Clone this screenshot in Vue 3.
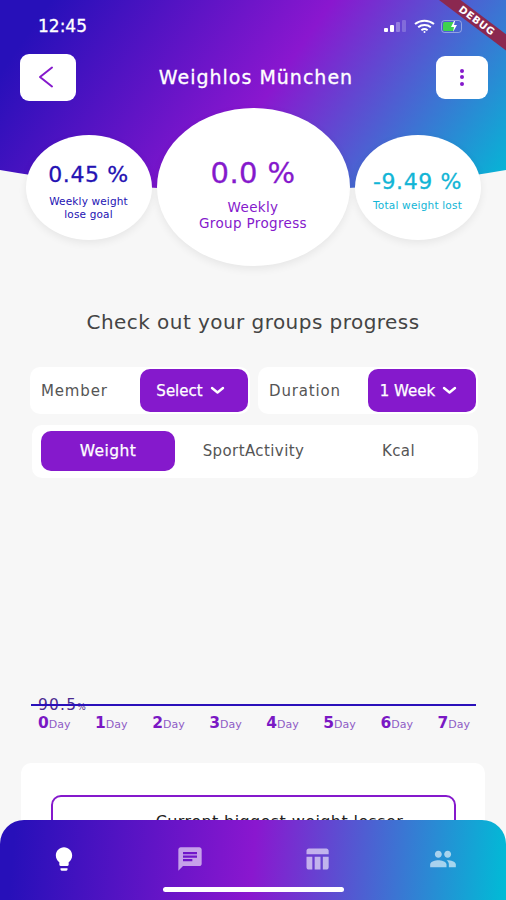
<script setup>
const stats = [
  { value: '0.45 %', label: ['Weekly weight', 'lose goal'], kind: 'goal' },
  { value: '0.0 %', label: ['Weekly', 'Group Progress'], kind: 'group' },
  { value: '-9.49 %', label: ['Total weight lost'], kind: 'total' }
]
const days = [0, 1, 2, 3, 4, 5, 6, 7]
const navIcons = [
  { d: 'M9 21c0 .55.45 1 1 1h4c.55 0 1-.45 1-1v-1H9v1zm3-19C8.14 2 5 5.14 5 9c0 2.38 1.19 4.47 3 5.74V17c0 .55.45 1 1 1h6c.55 0 1-.45 1-1v-2.26c1.81-1.27 3-3.36 3-5.74 0-3.86-3.14-7-7-7z', active: true },
  { d: 'M20 2H4c-1.1 0-1.99.9-1.99 2L2 22l4-4h14c1.1 0 2-.9 2-2V4c0-1.1-.9-2-2-2zM6 9h12v2H6V9zm8 5H6v-2h8v2zm4-6H6V6h12v2z' },
  { d: 'M10 10.02h5V21h-5zM17 21h3c1.1 0 2-.9 2-2v-9h-5v11zm3-18H5c-1.1 0-2 .9-2 2v3h19V5c0-1.1-.9-2-2-2zM3 19c0 1.1.9 2 2 2h3V10H3v9z' },
  { d: 'M16 11c1.66 0 2.99-1.34 2.99-3S17.66 5 16 5c-1.66 0-3 1.34-3 3s1.34 3 3 3zm-8 0c1.66 0 2.99-1.34 2.99-3S9.66 5 8 5C6.34 5 5 6.34 5 8s1.34 3 3 3zm0 2c-2.33 0-7 1.17-7 3.5V19h14v-2.5c0-2.33-4.67-3.5-7-3.5zm8 0c-.29 0-.62.02-.97.05 1.16.84 1.97 1.97 1.97 3.45V19h6v-2.5c0-2.33-4.67-3.5-7-3.5z' }
]
</script>

<template>
  <div class="screen">
    <div class="hero-bg"></div>

    <div class="status">
      <span class="time">12:45</span>
      <div class="status-icons">
        <svg width="24" height="14" viewBox="0 0 24 14">
          <rect x="0" y="9" width="4" height="4" rx="1" fill="#fff" />
          <rect x="6" y="6" width="4" height="7" rx="1" fill="#fff" />
          <rect x="12" y="3" width="4" height="10" rx="1" fill="#fff" opacity=".3" />
          <rect x="18" y="1" width="4" height="12" rx="1" fill="#fff" opacity=".2" />
        </svg>
        <svg width="21" height="15" viewBox="0 0 21 15" fill="none" stroke="#fff" stroke-width="2">
          <path d="M1 5c5.500-4.500 13.500-4.500 19 0" />
          <path d="M4.200 8.200c3.600-3 9-3 12.600 0" />
          <path d="M7.400 11.200c1.800-1.400 4.400-1.400 6.200 0" />
          <circle cx="10.500" cy="13" r="1" fill="#fff" stroke="none" />
        </svg>
        <svg width="23" height="13" viewBox="0 0 23 13">
          <rect x=".5" y=".5" width="20" height="12" rx="3" fill="none" stroke="#fff" stroke-opacity=".4" />
          <rect x="2" y="2" width="11" height="9" rx="1.500" fill="#3fd14e" />
          <path d="M13 1l-3 6h3l-1 5 4-7h-3l1-4z" fill="#fff" />
        </svg>
      </div>
    </div>

    <div class="debug"><span>DEBUG</span></div>

    <header class="topbar">
      <button class="tool back">
        <svg width="16" height="22" viewBox="0 0 16 22" fill="none" stroke="#8519cc" stroke-width="2" stroke-linecap="round" stroke-linejoin="round">
          <path d="M14 1.500L2 11l12 9.500" />
        </svg>
      </button>
      <h1>Weighlos München</h1>
      <button class="tool menu">
        <i></i><i></i><i></i>
      </button>
    </header>

    <section class="stats">
      <div v-for="s in stats" :key="s.kind" class="bubble" :class="s.kind">
        <div class="value">{{ s.value }}</div>
        <div class="label">
          <div v-for="line in s.label" :key="line">{{ line }}</div>
        </div>
      </div>
    </section>

    <h2>Check out your groups progress</h2>

    <section class="filters">
      <div class="filter">
        <span>Member</span>
        <button class="pick">Select
          <svg width="15" height="9" viewBox="0 0 15 9" fill="none" stroke="#fff" stroke-width="2.400" stroke-linecap="round" stroke-linejoin="round"><path d="M2 2l5.500 4.500L13 2" /></svg>
        </button>
      </div>
      <div class="filter">
        <span>Duration</span>
        <button class="pick">1 Week
          <svg width="15" height="9" viewBox="0 0 15 9" fill="none" stroke="#fff" stroke-width="2.400" stroke-linecap="round" stroke-linejoin="round"><path d="M2 2l5.500 4.500L13 2" /></svg>
        </button>
      </div>
    </section>

    <section class="tabs">
      <div class="tab on">Weight</div>
      <div class="tab">SportActivity</div>
      <div class="tab">Kcal</div>
    </section>

    <section class="chart">
      <div class="plot">
        <span class="tick">90.5<small>%</small></span>
        <div class="line"></div>
      </div>
      <div class="axis">
        <span v-for="d in days" :key="d"><b>{{ d }}</b>Day</span>
      </div>
    </section>

    <section class="card">
      <div class="loser">Current biggest weight losser</div>
    </section>

    <nav class="bottom">
      <svg v-for="(n, i) in navIcons" :key="i" class="nav-icon" :class="{ active: n.active }" width="28" height="28" viewBox="0 0 24 24">
        <path :d="n.d" />
      </svg>
      <div class="home"></div>
    </nav>
  </div>
</template>

<style scoped>
.screen {
  position: relative;
  width: 506px;
  height: 900px;
  overflow: hidden;
  background: #f7f7f7;
  font-family: "DejaVu Sans", "Noto Sans", sans-serif;
}
.hero-bg {
  position: absolute;
  left: 0;
  top: 0;
  width: 506px;
  height: 192px;
  background: linear-gradient(125deg, #2710b9 8%, #8a17cf 52%, #00bcd6 100%);
  clip-path: ellipse(555px 191px at 50% 0);
}
.status {
  position: relative;
  height: 53px;
  padding: 14px 40px 0 38px;
  box-sizing: border-box;
  display: flex;
  justify-content: space-between;
  align-items: flex-start;
  color: #fff;
}
.time {
  font-size: 17px;
  line-height: 24px;
  -webkit-text-stroke: .3px #fff;
}
.status-icons {
  display: flex;
  align-items: center;
  gap: 6px;
  height: 24px;
  padding-right: 2px;
}
.debug {
  position: absolute;
  right: -26px;
  top: 14px;
  width: 110px;
  height: 13px;
  background: #8b2850;
  transform: rotate(37deg);
  display: flex;
  align-items: center;
  justify-content: center;
  color: #fff;
  font-size: 10px;
  font-weight: 700;
  letter-spacing: .6px;
}
.topbar {
  position: relative;
  height: 48px;
  padding: 0 18px 0 20px;
  display: flex;
  align-items: center;
  justify-content: space-between;
}
.topbar h1 {
  margin: 0;
  font-size: 19px;
  font-weight: 400;
  letter-spacing: 1px;
  color: #fff;
  -webkit-text-stroke: .3px #fff;
}
.tool {
  border: none;
  background: #fff;
  border-radius: 9px;
  padding: 0;
  display: flex;
  align-items: center;
  justify-content: center;
}
.back {
  width: 56px;
  height: 47px;
}
.back svg {
  margin-right: 4px;
}
.menu {
  width: 52px;
  height: 43px;
  flex-direction: column;
  gap: 2.500px;
}
.menu i {
  width: 4px;
  height: 4px;
  border-radius: 50%;
  background: #8519cc;
}
.stats {
  position: relative;
  margin-top: 7px;
  height: 158px;
  display: flex;
  justify-content: center;
  align-items: center;
  gap: 5px;
}
.bubble {
  width: 126px;
  height: 105px;
  box-sizing: border-box;
  border-radius: 50%;
  background: #fff;
  box-shadow: 0 3px 8px rgba(0, 0, 0, .07);
  display: flex;
  flex-direction: column;
  align-items: center;
  text-align: center;
  white-space: nowrap;
}
.value {
  -webkit-text-stroke: .3px currentColor;
}
.goal {
  padding-top: 25px;
  color: #2412b3;
}
.goal .value {
  font-size: 22px;
  line-height: 30px;
  letter-spacing: .6px;
}
.goal .label {
  margin-top: 5px;
  font-size: 10.500px;
  line-height: 13px;
  letter-spacing: .15px;
}
.group {
  width: 193px;
  height: 158px;
  padding-top: 45px;
  color: #8519cc;
}
.group .value {
  font-size: 29px;
  line-height: 40px;
  letter-spacing: .4px;
}
.group .label {
  margin-top: 6px;
  font-size: 13.500px;
  line-height: 16px;
  letter-spacing: .35px;
}
.total {
  padding-top: 32px;
  color: #12b5d6;
}
.total .value {
  font-size: 22px;
  line-height: 30px;
  letter-spacing: .6px;
}
.total .label {
  margin-top: 2px;
  font-size: 10.500px;
  line-height: 13px;
  letter-spacing: .2px;
}
h2 {
  margin: 43px 0 0;
  text-align: center;
  font-size: 20px;
  line-height: 26px;
  font-weight: 400;
  letter-spacing: .45px;
  color: #444;
}
.filters {
  margin-top: 32px;
  padding: 0 28px 0 30px;
  display: flex;
  gap: 8px;
}
.filter {
  flex: 1;
  height: 47px;
  padding: 2px;
  box-sizing: border-box;
  border-radius: 10px;
  background: #fff;
  display: flex;
  align-items: stretch;
  justify-content: space-between;
}
.filter span {
  align-self: center;
  padding-left: 9px;
  font-size: 15px;
  letter-spacing: .85px;
  color: #555;
}
.pick {
  width: 108px;
  border: none;
  border-radius: 10px;
  background: #8519cc;
  color: #fff;
  font-family: inherit;
  font-size: 15px;
  -webkit-text-stroke: .25px #fff;
  display: flex;
  align-items: center;
  justify-content: center;
  gap: 7px;
  padding: 0 7px 0 0;
}
.tabs {
  margin: 11px 28px 0 32px;
  height: 53px;
  padding: 6px 9px 7px;
  box-sizing: border-box;
  border-radius: 10px;
  background: #fff;
  display: grid;
  grid-template-columns: 134px 157px 1fr;
}
.tab {
  display: flex;
  align-items: center;
  justify-content: center;
  font-size: 15px;
  letter-spacing: .4px;
  color: #555;
}
.tab:last-child {
  padding-right: 4px;
}
.tab.on {
  border-radius: 10px;
  background: #8519cc;
  color: #fff;
  font-size: 15.500px;
  -webkit-text-stroke: .25px #fff;
}
.chart {
  margin: 0 30px 0 31px;
}
.plot {
  position: relative;
  height: 226px;
}
.tick {
  position: absolute;
  left: 7px;
  bottom: -12px;
  font-size: 15.500px;
  line-height: 18px;
  letter-spacing: 1.200px;
  color: #4a2a90;
}
.tick small {
  font-size: 9px;
}
.line {
  position: absolute;
  left: 0;
  right: 0;
  bottom: -2px;
  height: 2px;
  background: #2a10ba;
}
.axis {
  margin-top: 9px;
  padding: 0 6px 0 7px;
  display: flex;
  justify-content: space-between;
  align-items: baseline;
  font-size: 11px;
  line-height: 20px;
  color: #8f5cc6;
}
.axis b {
  font-size: 15.500px;
  color: #7a18c4;
}
.card {
  margin: 28px 21px 0;
  height: 200px;
  padding: 32px 29px 0 30px;
  box-sizing: border-box;
  border-radius: 10px;
  background: #fff;
}
.loser {
  height: 80px;
  box-sizing: border-box;
  padding: 15px 0 0 52px;
  border: 2px solid #8519cc;
  border-radius: 10px;
  text-align: center;
  font-size: 16px;
  line-height: 20px;
  letter-spacing: .4px;
  color: #222;
}
.bottom {
  position: absolute;
  left: 0;
  right: 0;
  bottom: 0;
  height: 80px;
  padding: 0 49px 0 50px;
  box-sizing: border-box;
  border-radius: 24px 24px 0 0;
  background: linear-gradient(95deg, #2710b9 3%, #8a17cf 50%, #00bcd6 100%);
  display: flex;
  justify-content: space-between;
  align-items: flex-start;
}
.nav-icon {
  margin-top: 25px;
  fill: rgba(255, 255, 255, .6);
}
.nav-icon.active {
  fill: #fff;
}
.home {
  position: absolute;
  left: 163px;
  bottom: 8px;
  width: 181px;
  height: 5px;
  border-radius: 3px;
  background: #fff;
}
</style>
